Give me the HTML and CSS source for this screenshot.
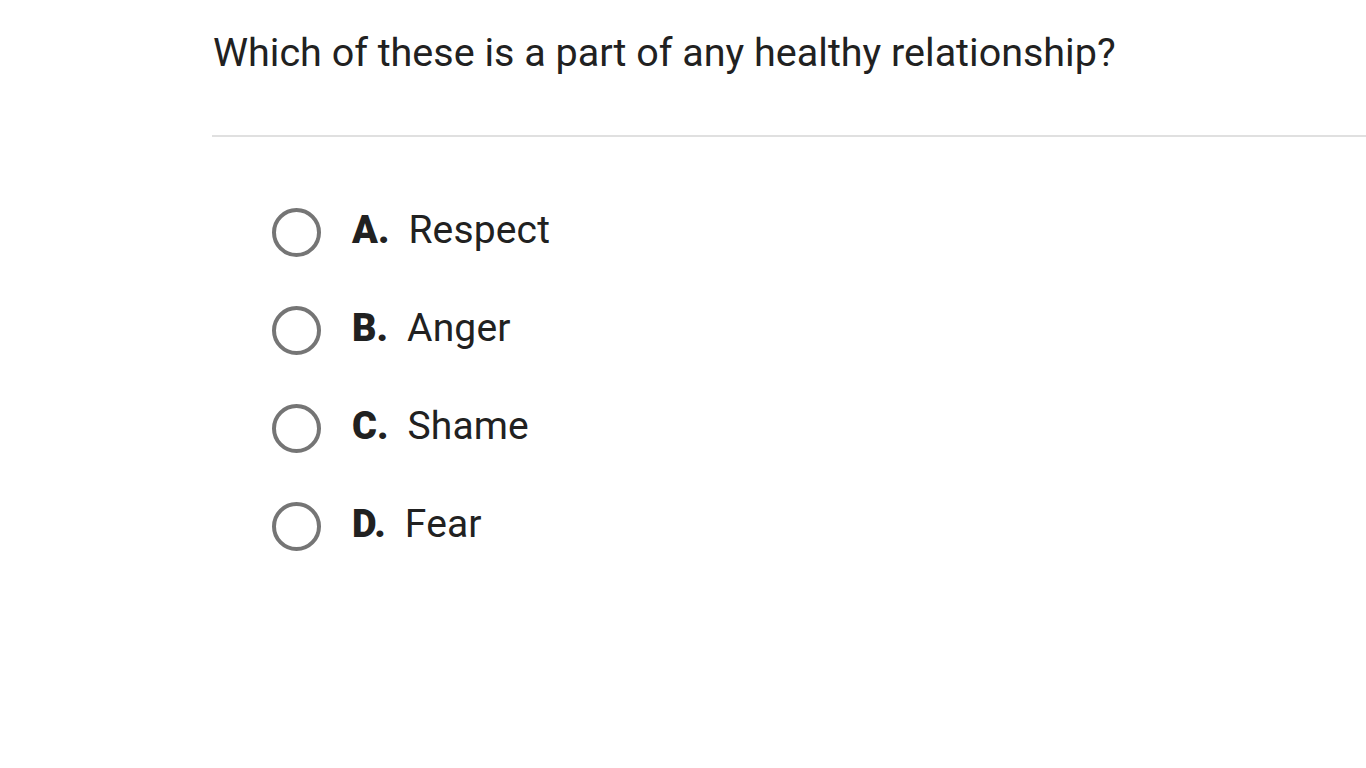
FILE: index.html
```html
<!DOCTYPE html>
<html>
<head>
<meta charset="utf-8">
<link rel="stylesheet" href="styles.css">
</head>
<body>
<main class="quiz">
  <h1 class="question">Which of these is a part of any healthy relationship?</h1>
  <hr class="divider">
  <ul class="options">
    <li class="option"><span class="radio"></span><span class="letter">A.</span><span class="answer">Respect</span></li>
    <li class="option"><span class="radio"></span><span class="letter">B.</span><span class="answer">Anger</span></li>
    <li class="option"><span class="radio"></span><span class="letter">C.</span><span class="answer">Shame</span></li>
    <li class="option"><span class="radio"></span><span class="letter">D.</span><span class="answer">Fear</span></li>
  </ul>
</main>
</body>
</html>
```
FILE: styles.css
```css
html, body {
  margin: 0;
  padding: 0;
  background: #fff;
}
body {
  font-family: Roboto, "Liberation Sans", sans-serif;
  color: #212121;
}
.quiz {
  padding-left: 212px;
}
.question {
  margin: 0;
  padding: 28px 0 0 1px;
  font-size: 39.5px;
  font-weight: 400;
  line-height: 50px;
}
.divider {
  margin: 57px 0 0 0;
  border: 0;
  height: 2px;
  background: #e0e0e0;
}
.options {
  list-style: none;
  margin: 0;
  padding: 71px 0 0 60px;
  display: flex;
  flex-direction: column;
  gap: 49px;
}
.option {
  display: flex;
  align-items: center;
  height: 49px;
}
.radio {
  flex: 0 0 auto;
  box-sizing: border-box;
  width: 49px;
  height: 49px;
  border: 4px solid #757575;
  border-radius: 50%;
  margin-right: 31px;
}
.letter {
  font-weight: 900;
  font-size: 38px;
  margin-right: 19px;
  padding-bottom: 6px;
}
.answer {
  font-size: 39px;
  letter-spacing: 0.15px;
  padding-bottom: 6px;
}
```
